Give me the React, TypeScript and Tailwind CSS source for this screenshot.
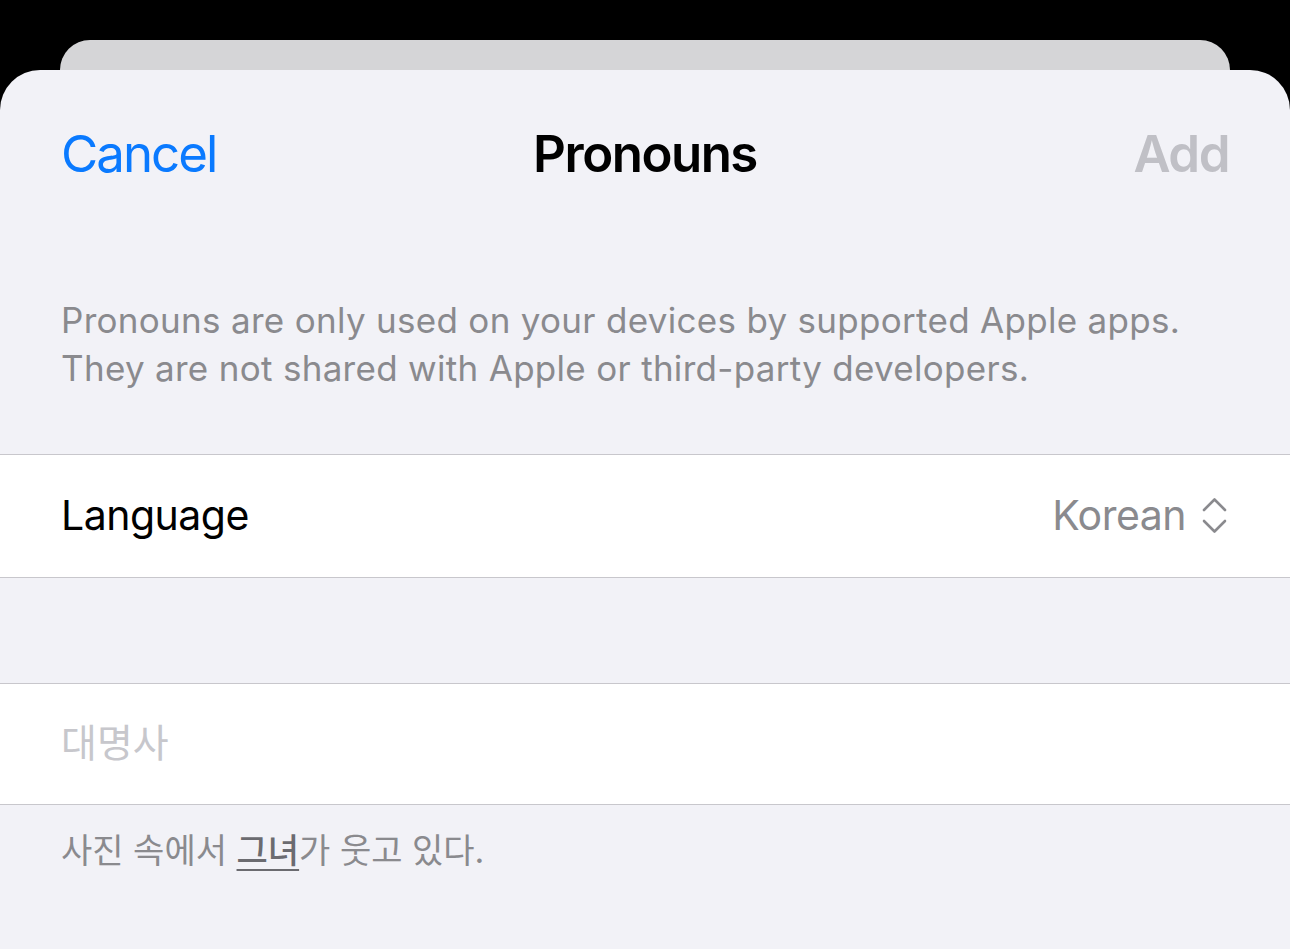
const font = { fontFamily: "Inter, 'Noto Sans CJK KR', sans-serif" };

// up/down selector glyph shown next to the picked language
const UpDown = () => (
  <svg width="25" height="37" viewBox="0 0 25 37" fill="none" stroke="currentColor" strokeWidth="2.6" strokeLinecap="round" strokeLinejoin="round">
    <path d="M2 13 12.5 2.5 23 13" />
    <path d="M2 24l10.5 10.5L23 24" />
  </svg>
);

export default function App() {
  return (
    <div className="min-h-[949px] w-[1290px] bg-black overflow-hidden" style={font}>
      {/* stacked card behind the sheet */}
      <div className="pt-10">
        <div className="mx-[60px] h-[30px] rounded-t-[32px] bg-[#d5d5d7]" />
      </div>

      {/* sheet */}
      <div className="h-[879px] rounded-t-[40px] bg-[#f2f2f7]">
        <div className="flex items-center justify-between px-[61px] pt-[46px]">
          <button className="w-[200px] text-left text-[51px] tracking-[-2px] text-[#0a7aff]">
            Cancel
          </button>
          <h1 className="text-[51px] font-semibold tracking-[-1.5px] text-black">Pronouns</h1>
          <button className="w-[200px] text-right text-[51px] font-semibold tracking-[-1.5px] text-[#c0c0c6]">
            Add
          </button>
        </div>

        <p className="px-[61px] pt-[103px] text-[35px] leading-[48px] tracking-[0.3px] text-[#8a8a8e]">
          Pronouns are only used on your devices by supported Apple apps.
          <br />
          They are not shared with Apple or third-party developers.
        </p>

        <div className="mt-[62px] flex h-[124px] items-center justify-between border-y border-[#c8c7cc] bg-white pl-[61px] pr-[63px]">
          <span className="text-[41px] tracking-[-0.5px] text-black">Language</span>
          <span className="flex items-center gap-[16px] text-[41px] tracking-[-0.5px] text-[#8a8a8e]">
            Korean
            <UpDown />
          </span>
        </div>

        <div className="mt-[105px] flex h-[122px] items-center border-y border-[#c8c7cc] bg-white px-[61px]">
          <span className="text-[39px] text-[#c7c7cc]">대명사</span>
        </div>

        <p className="px-[61px] pt-[20px] text-[34px] text-[#8a8a8e]">
          사진 속에서{" "}
          <span className="font-medium text-[#6b6b70] underline underline-offset-[6px] decoration-2">
            그녀
          </span>
          가 웃고 있다.
        </p>
      </div>
    </div>
  );
}
